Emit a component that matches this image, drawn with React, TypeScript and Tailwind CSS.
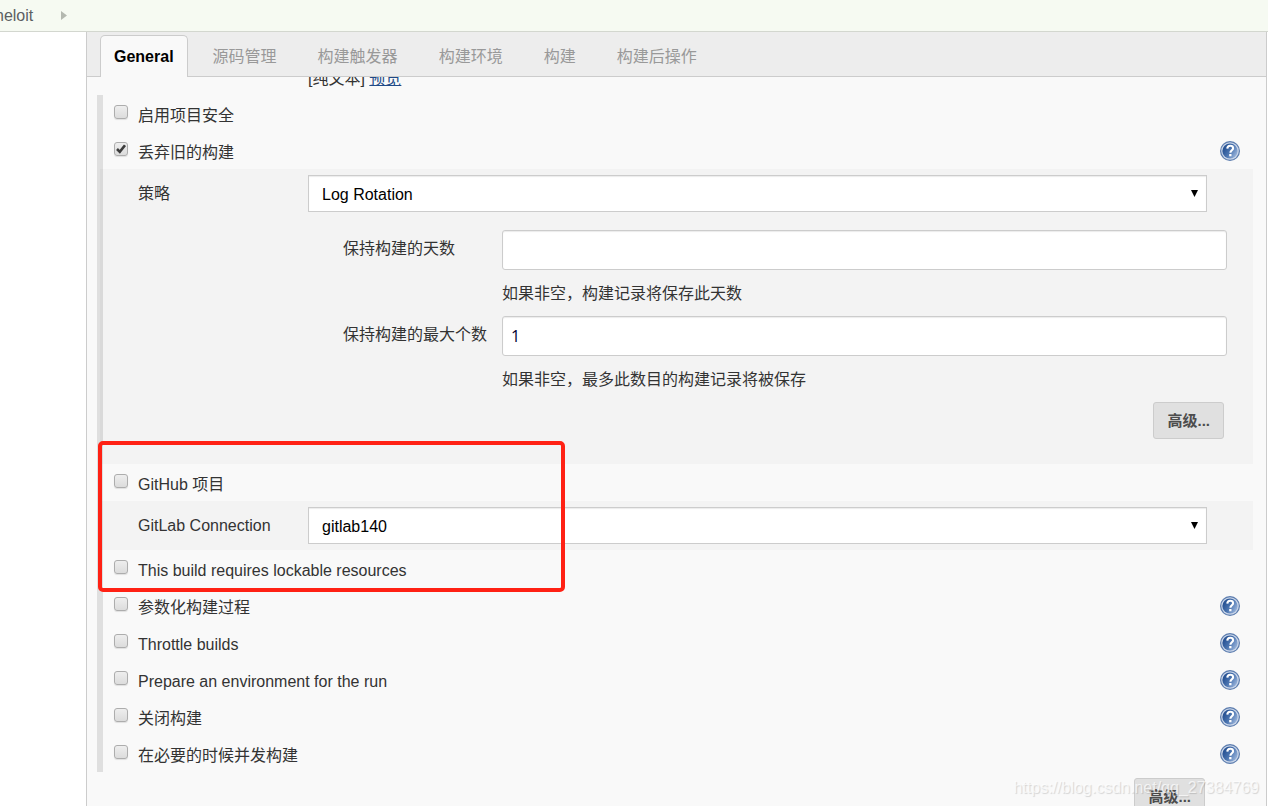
import { useState } from 'react';
import type { ReactNode } from 'react';

const TABS = ['General', '源码管理', '构建触发器', '构建环境', '构建', '构建后操作'];

function HelpButton({ topic }: { topic: string }) {
  return (
    <button type="button" aria-label={topic} className="h-5 w-5 shrink-0">
      <svg viewBox="0 0 20 20" className="h-5 w-5">
        <defs>
          <linearGradient id="helpFill" x1="0" y1="0.2" x2="1" y2="0.8">
            <stop offset="0" stopColor="#1c478a" />
            <stop offset="0.5" stopColor="#4a74b0" />
            <stop offset="1" stopColor="#a3bbdf" />
          </linearGradient>
        </defs>
        <circle cx="10" cy="10" r="10" fill="#5b7cae" />
        <circle cx="10" cy="10" r="8.8" fill="#c9d5e8" />
        <circle cx="10" cy="10" r="7.6" fill="url(#helpFill)" />
        <path
          d="M7.3 7.6C7.4 5.6 8.600 4.800 10.200 4.800c1.700 0 2.900.9 2.900 2.400 0 2-2.700 2.200-2.700 4.600"
          fill="none"
          stroke="#fff"
          strokeWidth="2.100"
        />
        <rect x="9.200" y="13" width="2.300" height="2.300" fill="#fff" />
      </svg>
    </button>
  );
}

interface OptionRowProps {
  id: string;
  label: string;
  help?: boolean;
  defaultChecked?: boolean;
}

function OptionRow({ id, label, help = false, defaultChecked = false }: OptionRowProps) {
  return (
    <div className="flex h-[37px] items-start pr-[13px] pl-[11px]">
      <span className="relative mt-[10px] h-[14px] w-[14px] shrink-0">
        <input
          id={id}
          type="checkbox"
          defaultChecked={defaultChecked}
          className="peer block h-[14px] w-[14px] appearance-none rounded-[3px] border border-[#adadad] bg-linear-to-b from-[#eeeeee] to-[#dcdcdc] shadow-[0_1px_1px_rgba(0,0,0,0.1)]"
        />
        <svg
          viewBox="0 0 14 14"
          className="pointer-events-none absolute inset-0 hidden h-[14px] w-[14px] peer-checked:block"
        >
          <path d="M3 7l2.800 2.800 5.200-6.600" fill="none" stroke="#3c3c3c" strokeWidth="2.600" />
        </svg>
      </span>
      <label htmlFor={id} className="mt-[9px] ml-[10px] flex-1">
        {label}
      </label>
      {help && (
        <span className="mt-[9px] flex">
          <HelpButton topic={label} />
        </span>
      )}
    </div>
  );
}

function SelectRow({ id, label, options }: { id: string; label: string; options: string[] }) {
  return (
    <div className="flex pr-[46px]">
      <label htmlFor={id} className="mt-[7px] w-[170px] shrink-0">
        {label}
      </label>
      <div className="relative flex-1">
        <select
          id={id}
          className="block h-[37px] w-full appearance-none border border-[#cccccc] bg-white px-[13px] pt-[2px] text-black shadow-[inset_0_1px_1px_rgba(0,0,0,0.08)]"
        >
          {options.map((option) => (
            <option key={option}>{option}</option>
          ))}
        </select>
        <svg viewBox="0 0 7 7" className="pointer-events-none absolute top-[15px] right-[9px] h-[7px] w-[7px]">
          <path d="M0 0h7L3.500 7z" fill="#000" />
        </svg>
      </div>
    </div>
  );
}

interface NumberFieldProps {
  id: string;
  label: string;
  hint: string;
  defaultValue?: string;
}

function NumberField({ id, label, hint, defaultValue = '' }: NumberFieldProps) {
  return (
    <div className="mb-[10px] grid grid-cols-[159px_1fr]">
      <label htmlFor={id} className="mt-[7px]">
        {label}
      </label>
      <input
        id={id}
        type="text"
        defaultValue={defaultValue}
        className="h-10 w-full rounded-[3px] border border-[#cccccc] bg-white px-2 font-['Open_Sans',sans-serif] text-[#000033] shadow-[inset_0_1px_1px_rgba(0,0,0,0.08)]"
      />
      <p className="col-start-2 mt-3">{hint}</p>
    </div>
  );
}

function ShadedBlock({ children, className = '' }: { children: ReactNode; className?: string }) {
  return <div className={`-ml-[3px] bg-[rgba(0,0,0,0.025)] pt-[6px] pl-[38px] ${className}`}>{children}</div>;
}

function AdvancedButton() {
  return (
    <button
      type="button"
      className="h-[37px] rounded-[3px] border border-[#cccccc] bg-[#e0e0e0] px-[13px] text-[15px] font-bold text-[#4d4d4d]"
    >
      高级...
    </button>
  );
}

export default function App() {
  const [activeTab, setActiveTab] = useState('General');

  return (
    <div className="flex h-screen flex-col overflow-hidden bg-white font-['Liberation_Sans','Noto_Sans_CJK_SC',sans-serif] text-base leading-6 text-[#333333]">
      {/* Breadcrumbs */}
      <header className="flex h-8 shrink-0 items-center border-b border-[#d3d7cf] bg-[#f6faf2]">
        <a href="#" className="-ml-[5px] text-[#5c5f62]">
          heloit
        </a>
        <svg viewBox="0 0 6 9" className="ml-7 h-[9px] w-[6px]">
          <path d="M0 0l6 4.500L0 9z" fill="#b4b8b0" />
        </svg>
      </header>

      <div className="flex min-h-0 flex-1 pr-px">
        <aside className="w-[86px] shrink-0" />

        <main className="relative flex min-w-0 flex-1 flex-col border-x border-[#cccccc] bg-[#f9f9f9]">
          {/* Section tabs */}
          <nav className="relative z-10 flex h-[45px] shrink-0 items-end border-b border-[#cccccc] bg-[#ededed] pl-[13px]">
            {TABS.map((tab) =>
              tab === activeTab ? (
                <button
                  key={tab}
                  type="button"
                  className="mr-[5px] -mb-px h-[42px] rounded-t-[5px] border border-b-0 border-[#cccccc] bg-[#f9f9f9] px-[13px] font-bold text-black"
                >
                  {tab}
                </button>
              ) : (
                <button
                  key={tab}
                  type="button"
                  onClick={() => setActiveTab(tab)}
                  className="mr-px h-[38px] px-5 text-[#999999]"
                >
                  {tab}
                </button>
              ),
            )}
          </nav>

          <form className="-mt-[10px] min-h-0 flex-1 overflow-hidden pr-[13px] pl-[10px]">
            <p className="mb-1 pl-[211px]">
              [纯文本]{' '}
              <a href="#" className="text-[#204a87] underline">
                预览
              </a>
            </p>

            <div className="border-l-[6px] border-[#dfdfdf]">
              <OptionRow id="security" label="启用项目安全" />
              <OptionRow id="discard" label="丢弃旧的构建" help defaultChecked />

              <ShadedBlock className="pb-[25px]">
                <SelectRow id="strategy" label="策略" options={['Log Rotation']} />
                <div className="mt-[18px] mr-[26px] ml-[205px]">
                  <NumberField id="days" label="保持构建的天数" hint="如果非空，构建记录将保存此天数" />
                  <NumberField
                    id="count"
                    label="保持构建的最大个数"
                    hint="如果非空，最多此数目的构建记录将被保存"
                    defaultValue="1"
                  />
                </div>
                <div className="flex justify-end pr-[29px]">
                  <AdvancedButton />
                </div>
              </ShadedBlock>

              <OptionRow id="github" label="GitHub 项目" />
              <ShadedBlock className="pb-[6px]">
                <SelectRow id="gitlab" label="GitLab Connection" options={['gitlab140']} />
              </ShadedBlock>
              <OptionRow id="lockable" label="This build requires lockable resources" />
              <OptionRow id="params" label="参数化构建过程" help />
              <OptionRow id="throttle" label="Throttle builds" help />
              <OptionRow id="environment" label="Prepare an environment for the run" help />
              <OptionRow id="disable" label="关闭构建" help />
              <OptionRow id="concurrent" label="在必要的时候并发构建" help />
            </div>

            <div className="mt-[6px] flex justify-end pr-12">
              <AdvancedButton />
            </div>
          </form>

          {/* Highlight around the GitLab settings */}
          <div className="pointer-events-none absolute top-[409px] left-[11px] h-[151px] w-[467px] rounded-[5px] border-4 border-[#ff2114]" />
          <span className="pointer-events-none absolute right-[7px] bottom-[6px] text-white/70 [text-shadow:1px_1px_1px_rgba(0,0,0,0.15)]">
            https://blog.csdn.net/qq_27384769
          </span>
        </main>
      </div>
    </div>
  );
}
